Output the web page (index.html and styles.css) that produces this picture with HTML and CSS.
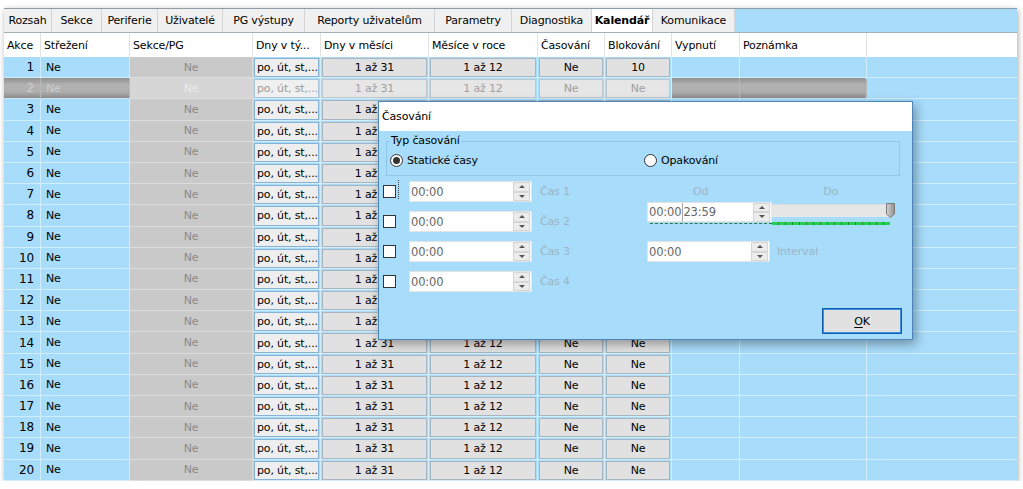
FILE: index.html
```html
<!DOCTYPE html>
<html lang="cs">
<head>
<meta charset="utf-8">
<title>Kalendář</title>
<link rel="stylesheet" href="styles.css">
</head>
<body>
<div class="window">
  <div class="tabs">
    <div class="tab">Rozsah</div>
    <div class="tab">Sekce</div>
    <div class="tab">Periferie</div>
    <div class="tab">Uživatelé</div>
    <div class="tab">PG výstupy</div>
    <div class="tab">Reporty uživatelům</div>
    <div class="tab">Parametry</div>
    <div class="tab">Diagnostika</div>
    <div class="tab active">Kalendář</div>
    <div class="tab">Komunikace</div>
  </div>
  <div class="head">
    <div>Akce</div><div>Střežení</div><div>Sekce/PG</div><div>Dny v tý...</div><div>Dny v měsíci</div><div>Měsíce v roce</div><div>Časování</div><div>Blokování</div><div>Vypnutí</div><div>Poznámka</div><div class="last"></div>
  </div>
  <div class="rows">
    <div class="row"><div class="cell num">1</div><div class="cell txt">Ne</div><div class="cell gray">Ne</div><div class="cell boxc"><span class="box">po, út, st,...</span></div><div class="cell bc"><span class="btn">1 až 31</span></div><div class="cell bc"><span class="btn">1 až 12</span></div><div class="cell bc"><span class="btn">Ne</span></div><div class="cell bc"><span class="btn">10</span></div><div class="cell"></div><div class="cell"></div><div class="cell last"></div></div>
    <div class="row sel"><div class="cell num">2</div><div class="cell txt">Ne</div><div class="cell gray">Ne</div><div class="cell boxc"><span class="box">po, út, st,...</span></div><div class="cell bc"><span class="btn">1 až 31</span></div><div class="cell bc"><span class="btn">1 až 12</span></div><div class="cell bc"><span class="btn">Ne</span></div><div class="cell bc"><span class="btn">Ne</span></div><div class="cell dark"></div><div class="cell dark endr"></div><div class="cell last"></div></div>
    <div class="row"><div class="cell num">3</div><div class="cell txt">Ne</div><div class="cell gray">Ne</div><div class="cell boxc"><span class="box">po, út, st,...</span></div><div class="cell bc"><span class="btn">1 až 31</span></div><div class="cell bc"><span class="btn"></span></div><div class="cell bc"><span class="btn"></span></div><div class="cell bc"><span class="btn"></span></div><div class="cell"></div><div class="cell"></div><div class="cell last"></div></div>
    <div class="row"><div class="cell num">4</div><div class="cell txt">Ne</div><div class="cell gray">Ne</div><div class="cell boxc"><span class="box">po, út, st,...</span></div><div class="cell bc"><span class="btn">1 až 31</span></div><div class="cell bc"><span class="btn"></span></div><div class="cell bc"><span class="btn"></span></div><div class="cell bc"><span class="btn"></span></div><div class="cell"></div><div class="cell"></div><div class="cell last"></div></div>
    <div class="row"><div class="cell num">5</div><div class="cell txt">Ne</div><div class="cell gray">Ne</div><div class="cell boxc"><span class="box">po, út, st,...</span></div><div class="cell bc"><span class="btn">1 až 31</span></div><div class="cell bc"><span class="btn"></span></div><div class="cell bc"><span class="btn"></span></div><div class="cell bc"><span class="btn"></span></div><div class="cell"></div><div class="cell"></div><div class="cell last"></div></div>
    <div class="row"><div class="cell num">6</div><div class="cell txt">Ne</div><div class="cell gray">Ne</div><div class="cell boxc"><span class="box">po, út, st,...</span></div><div class="cell bc"><span class="btn">1 až 31</span></div><div class="cell bc"><span class="btn"></span></div><div class="cell bc"><span class="btn"></span></div><div class="cell bc"><span class="btn"></span></div><div class="cell"></div><div class="cell"></div><div class="cell last"></div></div>
    <div class="row"><div class="cell num">7</div><div class="cell txt">Ne</div><div class="cell gray">Ne</div><div class="cell boxc"><span class="box">po, út, st,...</span></div><div class="cell bc"><span class="btn">1 až 31</span></div><div class="cell bc"><span class="btn"></span></div><div class="cell bc"><span class="btn"></span></div><div class="cell bc"><span class="btn"></span></div><div class="cell"></div><div class="cell"></div><div class="cell last"></div></div>
    <div class="row"><div class="cell num">8</div><div class="cell txt">Ne</div><div class="cell gray">Ne</div><div class="cell boxc"><span class="box">po, út, st,...</span></div><div class="cell bc"><span class="btn">1 až 31</span></div><div class="cell bc"><span class="btn"></span></div><div class="cell bc"><span class="btn"></span></div><div class="cell bc"><span class="btn"></span></div><div class="cell"></div><div class="cell"></div><div class="cell last"></div></div>
    <div class="row"><div class="cell num">9</div><div class="cell txt">Ne</div><div class="cell gray">Ne</div><div class="cell boxc"><span class="box">po, út, st,...</span></div><div class="cell bc"><span class="btn">1 až 31</span></div><div class="cell bc"><span class="btn"></span></div><div class="cell bc"><span class="btn"></span></div><div class="cell bc"><span class="btn"></span></div><div class="cell"></div><div class="cell"></div><div class="cell last"></div></div>
    <div class="row"><div class="cell num">10</div><div class="cell txt">Ne</div><div class="cell gray">Ne</div><div class="cell boxc"><span class="box">po, út, st,...</span></div><div class="cell bc"><span class="btn">1 až 31</span></div><div class="cell bc"><span class="btn"></span></div><div class="cell bc"><span class="btn"></span></div><div class="cell bc"><span class="btn"></span></div><div class="cell"></div><div class="cell"></div><div class="cell last"></div></div>
    <div class="row"><div class="cell num">11</div><div class="cell txt">Ne</div><div class="cell gray">Ne</div><div class="cell boxc"><span class="box">po, út, st,...</span></div><div class="cell bc"><span class="btn">1 až 31</span></div><div class="cell bc"><span class="btn"></span></div><div class="cell bc"><span class="btn"></span></div><div class="cell bc"><span class="btn"></span></div><div class="cell"></div><div class="cell"></div><div class="cell last"></div></div>
    <div class="row"><div class="cell num">12</div><div class="cell txt">Ne</div><div class="cell gray">Ne</div><div class="cell boxc"><span class="box">po, út, st,...</span></div><div class="cell bc"><span class="btn">1 až 31</span></div><div class="cell bc"><span class="btn"></span></div><div class="cell bc"><span class="btn"></span></div><div class="cell bc"><span class="btn"></span></div><div class="cell"></div><div class="cell"></div><div class="cell last"></div></div>
    <div class="row"><div class="cell num">13</div><div class="cell txt">Ne</div><div class="cell gray">Ne</div><div class="cell boxc"><span class="box">po, út, st,...</span></div><div class="cell bc"><span class="btn">1 až 31</span></div><div class="cell bc"><span class="btn"></span></div><div class="cell bc"><span class="btn"></span></div><div class="cell bc"><span class="btn"></span></div><div class="cell"></div><div class="cell"></div><div class="cell last"></div></div>
    <div class="row"><div class="cell num">14</div><div class="cell txt">Ne</div><div class="cell gray">Ne</div><div class="cell boxc"><span class="box">po, út, st,...</span></div><div class="cell bc"><span class="btn">1 až 31</span></div><div class="cell bc"><span class="btn">1 až 12</span></div><div class="cell bc"><span class="btn">Ne</span></div><div class="cell bc"><span class="btn">Ne</span></div><div class="cell"></div><div class="cell"></div><div class="cell last"></div></div>
    <div class="row"><div class="cell num">15</div><div class="cell txt">Ne</div><div class="cell gray">Ne</div><div class="cell boxc"><span class="box">po, út, st,...</span></div><div class="cell bc"><span class="btn">1 až 31</span></div><div class="cell bc"><span class="btn">1 až 12</span></div><div class="cell bc"><span class="btn">Ne</span></div><div class="cell bc"><span class="btn">Ne</span></div><div class="cell"></div><div class="cell"></div><div class="cell last"></div></div>
    <div class="row"><div class="cell num">16</div><div class="cell txt">Ne</div><div class="cell gray">Ne</div><div class="cell boxc"><span class="box">po, út, st,...</span></div><div class="cell bc"><span class="btn">1 až 31</span></div><div class="cell bc"><span class="btn">1 až 12</span></div><div class="cell bc"><span class="btn">Ne</span></div><div class="cell bc"><span class="btn">Ne</span></div><div class="cell"></div><div class="cell"></div><div class="cell last"></div></div>
    <div class="row"><div class="cell num">17</div><div class="cell txt">Ne</div><div class="cell gray">Ne</div><div class="cell boxc"><span class="box">po, út, st,...</span></div><div class="cell bc"><span class="btn">1 až 31</span></div><div class="cell bc"><span class="btn">1 až 12</span></div><div class="cell bc"><span class="btn">Ne</span></div><div class="cell bc"><span class="btn">Ne</span></div><div class="cell"></div><div class="cell"></div><div class="cell last"></div></div>
    <div class="row"><div class="cell num">18</div><div class="cell txt">Ne</div><div class="cell gray">Ne</div><div class="cell boxc"><span class="box">po, út, st,...</span></div><div class="cell bc"><span class="btn">1 až 31</span></div><div class="cell bc"><span class="btn">1 až 12</span></div><div class="cell bc"><span class="btn">Ne</span></div><div class="cell bc"><span class="btn">Ne</span></div><div class="cell"></div><div class="cell"></div><div class="cell last"></div></div>
    <div class="row"><div class="cell num">19</div><div class="cell txt">Ne</div><div class="cell gray">Ne</div><div class="cell boxc"><span class="box">po, út, st,...</span></div><div class="cell bc"><span class="btn">1 až 31</span></div><div class="cell bc"><span class="btn">1 až 12</span></div><div class="cell bc"><span class="btn">Ne</span></div><div class="cell bc"><span class="btn">Ne</span></div><div class="cell"></div><div class="cell"></div><div class="cell last"></div></div>
    <div class="row"><div class="cell num">20</div><div class="cell txt">Ne</div><div class="cell gray">Ne</div><div class="cell boxc"><span class="box">po, út, st,...</span></div><div class="cell bc"><span class="btn">1 až 31</span></div><div class="cell bc"><span class="btn">1 až 12</span></div><div class="cell bc"><span class="btn">Ne</span></div><div class="cell bc"><span class="btn">Ne</span></div><div class="cell"></div><div class="cell"></div><div class="cell last"></div></div>
  </div>

  <div class="dialog">
    <div class="dlg-title">Časování</div>
    <div class="dlg-body">
      <fieldset class="group">
        <legend>Typ časování</legend>
        <div class="radios">
          <label class="radio first"><span class="rb checked"></span>Statické časy</label>
          <label class="radio"><span class="rb"></span>Opakování</label>
        </div>
      </fieldset>
      <div class="times">
        <div class="left">
          <div class="trow"><span class="chk focused"></span><span class="spin"><span class="val">00:00</span><span class="arrows"><span class="up"></span><span class="dn"></span></span></span><span class="dis">Čas 1</span></div>
          <div class="trow"><span class="chk"></span><span class="spin"><span class="val">00:00</span><span class="arrows"><span class="up"></span><span class="dn"></span></span></span><span class="dis">Čas 2</span></div>
          <div class="trow"><span class="chk"></span><span class="spin"><span class="val">00:00</span><span class="arrows"><span class="up"></span><span class="dn"></span></span></span><span class="dis">Čas 3</span></div>
          <div class="trow"><span class="chk"></span><span class="spin"><span class="val">00:00</span><span class="arrows"><span class="up"></span><span class="dn"></span></span></span><span class="dis">Čas 4</span></div>
        </div>
        <div class="right">
          <div class="odlbls"><span class="dis od">Od</span><span class="dis do">Do</span></div>
          <div class="range">
            <span class="spin wide"><span class="val">00:00</span><span class="sep"></span><span class="val v2">23:59</span><span class="arrows"><span class="up"></span><span class="dn"></span></span></span>
            <span class="track"></span>
            <svg class="thumb" width="9" height="15" viewBox="0 0 9 15"><defs><linearGradient id="tg" x1="0" x2="1" y1="0" y2="0"><stop offset="0" stop-color="#d4d4d4"/><stop offset="1" stop-color="#8e8e8e"/></linearGradient></defs><path d="M0.5 0.5 H8.5 V11 L4.5 14.5 L0.5 11 Z" fill="url(#tg)" stroke="#7a7a7a"/></svg>
          </div>
          <div class="green"><span class="gl"></span><span class="gr"></span></div>
          <div class="introw"><span class="spin"><span class="val">00:00</span><span class="arrows"><span class="up"></span><span class="dn"></span></span></span><span class="dis">Interval</span></div>
        </div>
      </div>
      <div class="dlg-foot"><span class="ok"><u>O</u>K</span></div>
    </div>
  </div>
</div>
</body>
</html>
```
FILE: styles.css
```css
* { box-sizing: border-box; }

body {
  margin: 0;
  background: #ffffff;
  font-family: "DejaVu Sans", Verdana, sans-serif;
  font-size: 11px;
  letter-spacing: -0.15px;
  color: #000;
}

.window {
  position: relative;
  margin: 8px 0 0 4px;
  width: 1013px;
  height: 473px;
  background: #a7dcfa;
  border-top: 1px solid #8e9ca8;
  box-shadow: 1px 2px 6px rgba(0, 0, 0, 0.35);
}

/* tabs */
.tabs {
  display: grid;
  grid-template-columns: 48px 50px 56px 65px 82px 130px 77px 80px 61px 82px;
  height: 24px;
  border-bottom: 1px solid #a3b1bb;
}
.tab {
  background: #f0f0f0;
  border-right: 1px solid #d4d4d4;
  display: flex;
  align-items: center;
  justify-content: center;
  white-space: nowrap;
}
.tab.active {
  background: #ffffff;
  font-weight: bold;
}

/* grid */
.head, .row {
  display: grid;
  grid-template-columns: 37px 89px 123px 68px 108px 109px 67px 67px 68px 127px 1fr;
}
.head {
  height: 24px;
  background: #ffffff;
}
.head > div {
  border-right: 1px solid #e3e3e3;
  padding-left: 3px;
  display: flex;
  align-items: center;
  white-space: nowrap;
  overflow: hidden;
}
.head > div.last { border-right: none; }

.row { height: 21.2px; }
.cell {
  border-right: 1px solid #d2eefd;
  border-bottom: 1px solid #d2eefd;
  display: flex;
  align-items: center;
  white-space: nowrap;
  overflow: hidden;
  min-width: 0;
}
.cell.last { border-right: none; }
.num { justify-content: flex-end; padding-right: 6px; font-size: 12px; }
.txt { padding-left: 5px; }
.gray {
  background: #c9c9c9;
  color: #8a8a8a;
  justify-content: center;
  border-right-color: #d8d8d8;
  border-bottom-color: #dcdcdc;
}
.boxc { padding: 1px 1px 0 1px; }
.box {
  flex: 1;
  height: 100%;
  background: #eeeeee;
  border: 1px solid #86b3d4;
  padding-left: 2px;
  display: flex;
  align-items: center;
}
.bc { padding: 1px 1px 0 1px; }
.btn {
  flex: 1;
  height: 100%;
  background: #e1e1e1;
  border: 1px solid #a9b5be;
  display: flex;
  align-items: center;
  justify-content: center;
}

/* selected / disabled row */
.sel .num, .sel .txt, .sel .dark {
  background: linear-gradient(#8f8f8f 0%, #b3b3b3 35%, #aeaeae 70%, #8a8a8a 100%);
  color: #cdcdcd;
  border-right-color: #b8b8b8;
  border-bottom-color: #c8e6f8;
}
.sel .endr { border-radius: 0 3px 3px 0; }
.sel .gray { background: #d6d6d6; color: #ebebeb; }
.sel .box { background: #f0f0f0; color: #9a9a9a; border-color: #a9c5da; }
.sel .btn { background: #e6e6e6; color: #a0a0a0; border-color: #c0c8ce; }

/* dialog */
.dialog {
  position: absolute;
  left: 374px;
  top: 92px;
  width: 535px;
  height: 239px;
  border: 1px solid #4d84b9;
  background: #a7dcfa;
  box-shadow: 3px 4px 10px rgba(0, 0, 0, 0.35);
  display: flex;
  flex-direction: column;
}
.dlg-title {
  height: 29px;
  background: #ffffff;
  padding-left: 3px;
  display: flex;
  align-items: center;
  font-size: 11px;
}
.dlg-body {
  flex: 1;
  display: flex;
  flex-direction: column;
}
.group {
  margin: 3px 12px 0 7px;
  padding: 5px 0 8px 3px;
  border: 1px solid #93c7e6;
  min-width: 0;
}
.group legend {
  padding: 0 1px;
  margin-left: 0;
  line-height: 14px;
}
.radios { display: flex; height: 14px; }
.radio {
  display: flex;
  align-items: center;
  gap: 3px;
}
.radio.first { width: 254px; }
.rb {
  width: 13px;
  height: 13px;
  border-radius: 50%;
  border: 1px solid #333333;
  background: #ffffff;
  display: flex;
  align-items: center;
  justify-content: center;
  margin-right: 1px;
}
.rb.checked::after {
  content: "";
  width: 7px;
  height: 7px;
  border-radius: 50%;
  background: #333333;
}

.times {
  display: flex;
  margin-top: 5px;
  padding-left: 4px;
}
.left {
  width: 264px;
  display: flex;
  flex-direction: column;
  gap: 9px;
}
.trow {
  display: flex;
  align-items: center;
  height: 21px;
}
.chk {
  position: relative;
  width: 13px;
  height: 13px;
  border: 1px solid #333333;
  background: #ffffff;
  margin-right: 13px;
}
.chk.focused::after {
  content: "";
  position: absolute;
  left: 14px;
  top: -6px;
  height: 19px;
  border-left: 1px dotted #444444;
}
.spin {
  width: 123px;
  height: 21px;
  background: #ffffff;
  border: 1px solid #e4e4e4;
  display: flex;
  align-items: center;
  color: #666666;
  font-size: 11.5px;
}
.spin .val { padding-left: 1px; }
.spin .v2 { padding-left: 0; flex: 1; }
.spin .val:first-child { flex: 1; }
.spin.wide .val:first-child { flex: none; }
.spin .sep {
  width: 1px;
  height: 19px;
  background: #a8a8a8;
  margin: 0 0 0 1px;
}
.arrows {
  width: 17px;
  height: 19px;
  display: flex;
  flex-direction: column;
  margin-right: 1px;
}
.arrows .up, .arrows .dn {
  flex: 1;
  background: #ececec;
  border: 1px solid #d6d6d6;
  display: flex;
  align-items: center;
  justify-content: center;
}
.arrows .up::after {
  content: "";
  border-left: 3px solid transparent;
  border-right: 3px solid transparent;
  border-bottom: 3px solid #555555;
}
.arrows .dn::after {
  content: "";
  border-left: 3px solid transparent;
  border-right: 3px solid transparent;
  border-top: 3px solid #555555;
}
.dis {
  color: #9db4c4;
  margin-left: 8px;
}

.right {
  width: 250px;
  display: flex;
  flex-direction: column;
}
.odlbls {
  height: 21px;
  display: flex;
  align-items: center;
}
.odlbls .od { margin-left: 46px; }
.odlbls .do { margin-left: 115px; }
.range {
  display: flex;
  align-items: flex-start;
  height: 20px;
}
.spin.wide { width: 125px; height: 20px; }
.track {
  width: 117px;
  height: 13px;
  margin-top: 2px;
  background: #e6e6e6;
  border-top: 1px solid #dadada;
}
.thumb { margin-left: -3px; margin-top: 1px; }
.green {
  display: flex;
  height: 3px;
  margin-left: 3px;
  width: 240px;
}
.gl {
  width: 122px;
  border-bottom: 1px dashed #2b7a3a;
  height: 2px;
}
.gr {
  flex: 1;
  background: repeating-linear-gradient(90deg, #23d04c 0 6px, #178a33 6px 7px);
}
.introw {
  display: flex;
  align-items: center;
  margin-top: 16px;
  height: 21px;
}
.introw .dis { margin-left: 7px; }

.dlg-foot {
  margin-top: auto;
  display: flex;
  justify-content: flex-end;
  padding: 0 10px 5px 0;
}
.ok {
  width: 80px;
  height: 26px;
  background: #e1e1e1;
  border: 1px solid #0c5fae;
  box-shadow: inset 0 0 0 1px #3d8fdc;
  display: flex;
  align-items: center;
  justify-content: center;
}
.ok u { text-decoration-thickness: 1px; text-underline-offset: 2px; }
```
